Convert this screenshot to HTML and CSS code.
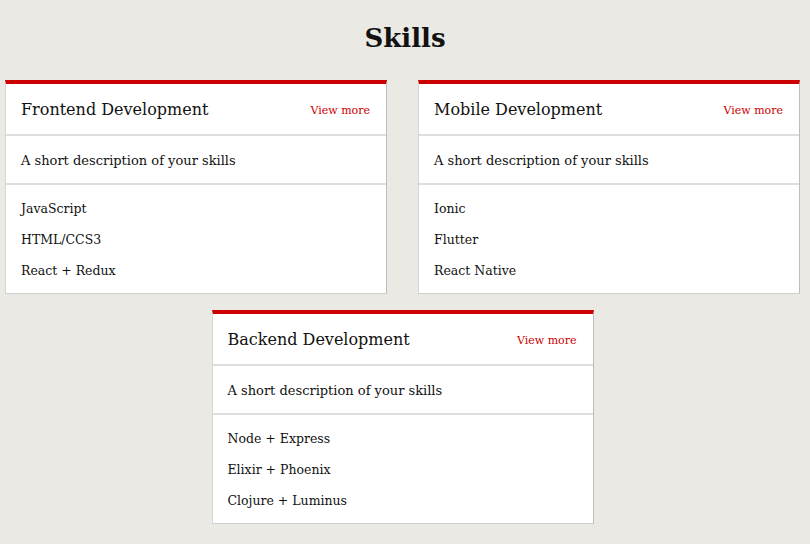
FILE: index.html
```html
<!DOCTYPE html>
<html>
<head>
<meta charset="utf-8">
<link rel="stylesheet" href="styles.css">
</head>
<body>
<h1 class="title">Skills</h1>
<div class="grid">
  <div class="card">
    <div class="card-head"><span class="card-title">Frontend Development</span><a class="more">View more</a></div>
    <div class="card-desc">A short description of your skills</div>
    <ul class="card-list"><li>JavaScript</li><li>HTML/CCS3</li><li>React + Redux</li></ul>
  </div>
  <div class="card">
    <div class="card-head"><span class="card-title">Mobile Development</span><a class="more">View more</a></div>
    <div class="card-desc">A short description of your skills</div>
    <ul class="card-list"><li>Ionic</li><li>Flutter</li><li>React Native</li></ul>
  </div>
  <div class="card">
    <div class="card-head"><span class="card-title">Backend Development</span><a class="more">View more</a></div>
    <div class="card-desc">A short description of your skills</div>
    <ul class="card-list"><li>Node + Express</li><li>Elixir + Phoenix</li><li>Clojure + Luminus</li></ul>
  </div>
</div>
</body>
</html>
```
FILE: styles.css
```css
html, body { margin: 0; padding: 0; }
body {
  background: #ebe9e4;
  font-family: "DejaVu Serif", serif;
  color: #111;
}
.title {
  margin: 0;
  height: 80px;
  line-height: 76px;
  text-align: center;
  font-size: 26px;
  font-weight: bold;
}
.grid {
  display: flex;
  flex-wrap: wrap;
  justify-content: center;
  column-gap: 31px;
  row-gap: 16px;
  padding: 0 10px 0 5px;
}
.card {
  width: 382px;
  box-sizing: border-box;
  background: #fff;
  border-top: 4px solid #cc0000;
  border-left: 1px solid #d6d6d6;
  border-right: 1px solid #bdbdbd;
  border-bottom: 1px solid #cfcfcf;
}
.card-head {
  height: 50px;
  display: flex;
  align-items: center;
  justify-content: space-between;
  padding: 0 16px 0 15px;
  border-bottom: 2px solid #dedede;
}
.card-title { font-size: 16px; }
.more { color: #cc0000; font-size: 11px; padding-top: 2px; }
.card-desc {
  height: 49px;
  display: flex;
  align-items: center;
  padding: 1px 15px 0;
  box-sizing: border-box;
  font-size: 13px;
  border-bottom: 2px solid #dedede;
}
.card-list {
  list-style: none;
  margin: 0;
  padding: 8px 15px 7px;
  font-size: 12.5px;
}
.card-list li {
  height: 31px;
  line-height: 31px;
}
```
